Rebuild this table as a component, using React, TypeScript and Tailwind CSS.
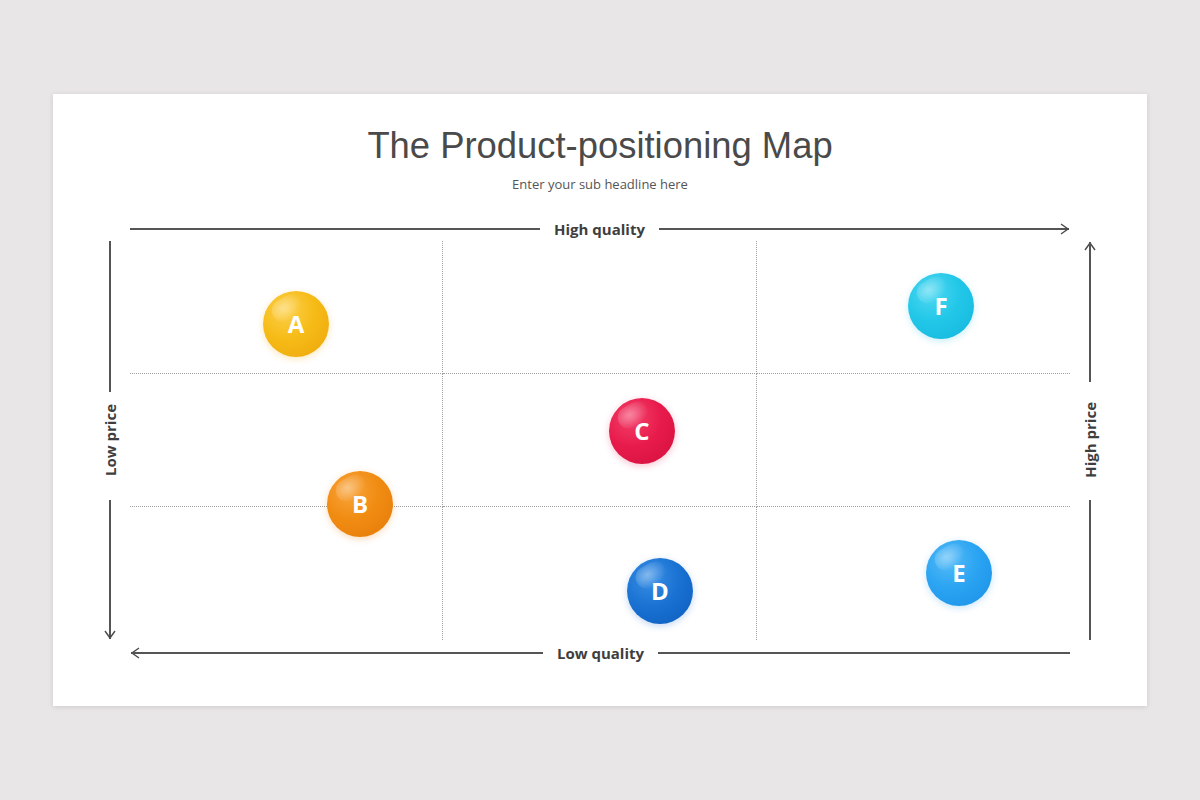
import React from "react";

const bubbles = [
    {
        letter: "A",
        pos: "left-[133px] top-[50px]",
        color: "bg-[radial-gradient(circle_at_35%_30%,#fcd04a_0%,#f6bb17_45%,#eca60a_100%)] shadow-[0_2px_7px_rgba(240,170,10,0.28)]",
    },
    {
        letter: "B",
        pos: "left-[197px] top-[230px]",
        color: "bg-[radial-gradient(circle_at_35%_30%,#f8a43c_0%,#f18c12_45%,#e37a08_100%)] shadow-[0_2px_7px_rgba(235,130,10,0.28)]",
    },
    {
        letter: "C",
        pos: "left-[479px] top-[157px]",
        color: "bg-[radial-gradient(circle_at_35%_30%,#f3406a_0%,#e81c4c_45%,#d20e3c_100%)] shadow-[0_2px_7px_rgba(220,20,70,0.25)]",
    },
    {
        letter: "D",
        pos: "left-[497px] top-[317px]",
        color: "bg-[radial-gradient(circle_at_35%_30%,#3a90e6_0%,#1a72d2_45%,#0b5cbd_100%)] shadow-[0_2px_7px_rgba(20,100,200,0.25)]",
    },
    {
        letter: "E",
        pos: "left-[796px] top-[299px]",
        color: "bg-[radial-gradient(circle_at_35%_30%,#55bbf7_0%,#2ba4f2_45%,#1a8fe6_100%)] shadow-[0_2px_7px_rgba(40,150,240,0.25)]",
    },
    {
        letter: "F",
        pos: "left-[778px] top-[32px]",
        color: "bg-[radial-gradient(circle_at_35%_30%,#4fd8f1_0%,#22c7e8_45%,#12b5dc_100%)] shadow-[0_2px_7px_rgba(30,190,230,0.25)]",
    },
];

const cells = [
    "border-r border-b",
    "border-r border-b",
    "border-b",
    "border-r border-b",
    "border-r border-b",
    "border-b",
    "border-r",
    "border-r",
    "",
];

function Chevron({ dir }: { dir: "right" | "left" | "up" | "down" }) {
    const paths = {
        right: "M1 1 L8 6 L1 11",
        left: "M9 1 L2 6 L9 11",
        up: "M1 9 L6 2 L11 9",
        down: "M1 1 L6 8 L11 1",
    };
    const size = dir === "right" || dir === "left" ? "w-[10px] h-[12px]" : "w-[12px] h-[10px]";
    const view = dir === "right" || dir === "left" ? "0 0 10 12" : "0 0 12 10";
    return (
        <svg className={size} viewBox={view} fill="none">
            <path d={paths[dir]} stroke="#4a4a4a" strokeWidth="1.4" strokeLinejoin="miter" />
        </svg>
    );
}

const axisLabel = "font-['Open_Sans',sans-serif] font-bold text-[15px] text-[#3e3e3e] leading-none whitespace-nowrap";

export default function App() {
    return (
        <div className="w-[1200px] h-[800px] bg-[#e8e6e7] pt-[94px] pl-[53px]">
            <div className="w-[1094px] h-[612px] bg-white shadow-[0_1px_5px_rgba(0,0,0,0.12)] pt-[30px] flex flex-col items-center">
                {/* Title */}
                <h1 className="font-['Liberation_Sans',Arial,sans-serif] text-[36.4px] leading-[44px] text-[#4a4a4a]">
                    The Product-positioning Map
                </h1>
                <p className="mt-[7px] font-['Open_Sans',sans-serif] text-[13px] leading-[18px] text-[#555]">
                    Enter your sub headline here
                </p>

                {/* Chart */}
                <div className="mt-[24px] grid grid-cols-[40px_940px_40px] grid-rows-[24px_399px_26px]">
                    <div />
                    {/* Top axis */}
                    <div className="flex items-center">
                        <div className="flex-1 h-[1.5px] bg-[#555]" />
                        <span className={`${axisLabel} px-[14px]`}>High quality</span>
                        <div className="flex-1 h-[1.5px] bg-[#555]" />
                        <div className="-ml-[9px] flex">
                            <Chevron dir="right" />
                        </div>
                    </div>
                    <div />

                    {/* Left axis */}
                    <div className="flex flex-col items-center">
                        <div className="h-[151px] w-[1.5px] bg-[#555]" />
                        <div className="h-[108px] w-[20px] flex items-start justify-center pt-[12px]">
                            <span className={`${axisLabel} [writing-mode:vertical-rl] rotate-180`}>Low price</span>
                        </div>
                        <div className="flex-1 w-[1.5px] bg-[#555]" />
                        <div className="-mt-[9px] flex">
                            <Chevron dir="down" />
                        </div>
                    </div>

                    {/* Grid */}
                    <div className="relative grid grid-cols-3 grid-rows-3">
                        {cells.map((c, i) => (
                            <div key={i} className={`${c} border-dotted border-[#a0a0a0]`} />
                        ))}
                        {bubbles.map((b) => (
                            <div
                                key={b.letter}
                                className={`absolute ${b.pos} ${b.color} w-[66px] h-[66px] rounded-full flex items-center justify-center overflow-hidden`}
                            >
                                <div className="absolute left-[8px] top-[6px] w-[32px] h-[22px] rounded-full bg-[radial-gradient(ellipse_at_40%_40%,rgba(255,255,255,0.38)_0%,rgba(255,255,255,0.1)_55%,rgba(255,255,255,0)_75%)] -rotate-[30deg]" />
                                <span className="relative font-['Open_Sans',sans-serif] font-bold text-[24px] leading-none text-white">
                                    {b.letter}
                                </span>
                            </div>
                        ))}
                    </div>

                    {/* Right axis */}
                    <div className="flex flex-col items-center">
                        <div className="-mb-[9px] flex">
                            <Chevron dir="up" />
                        </div>
                        <div className="flex-1 w-[1.5px] bg-[#555]" />
                        <div className="h-[118px] w-[20px] flex items-start justify-center pt-[20px]">
                            <span className={`${axisLabel} [writing-mode:vertical-rl] rotate-180`}>High price</span>
                        </div>
                        <div className="h-[140px] w-[1.5px] bg-[#555]" />
                    </div>

                    <div />
                    {/* Bottom axis */}
                    <div className="flex items-center">
                        <div className="-mr-[9px] flex">
                            <Chevron dir="left" />
                        </div>
                        <div className="flex-1 h-[1.5px] bg-[#555]" />
                        <span className={`${axisLabel} px-[14px]`}>Low quality</span>
                        <div className="flex-1 h-[1.5px] bg-[#555]" />
                    </div>
                    <div />
                </div>
            </div>
        </div>
    );
}
